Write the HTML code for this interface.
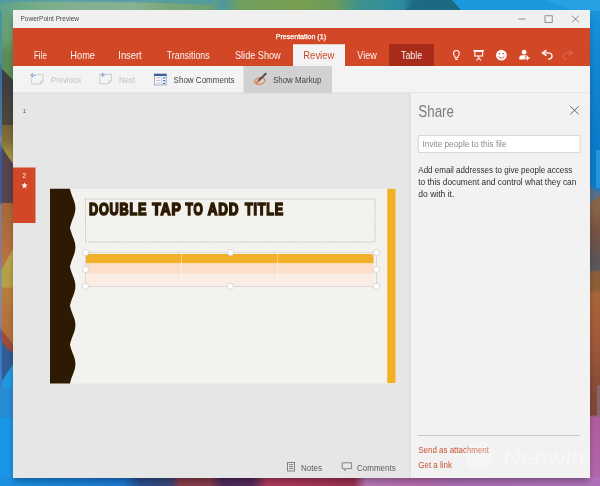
<!DOCTYPE html>
<html>
<head>
<meta charset="utf-8">
<title>PowerPoint Preview</title>
<style>
html,body{margin:0;padding:0;width:600px;height:486px;overflow:hidden;background:#1e8fdc;}
svg{display:block;position:absolute;left:0;top:0;}
text{font-family:"Liberation Sans",sans-serif;}
</style>
</head>
<body>
<svg width="600" height="486" viewBox="0 0 600 486">
<defs>
  <linearGradient id="gTop" x1="0" y1="0" x2="600" y2="0" gradientUnits="userSpaceOnUse">
    <stop offset="0" stop-color="#5fa08a"/>
    <stop offset="0.03" stop-color="#6aa884"/>
    <stop offset="0.08" stop-color="#7cae8e"/>
    <stop offset="0.22" stop-color="#88b292"/>
    <stop offset="0.28" stop-color="#78a878"/>
    <stop offset="0.35" stop-color="#6ea274"/>
    <stop offset="0.37" stop-color="#4c98a0"/>
    <stop offset="0.40" stop-color="#70a060"/>
    <stop offset="0.50" stop-color="#7a9e52"/>
    <stop offset="0.56" stop-color="#6a9a5c"/>
    <stop offset="0.60" stop-color="#3c9290"/>
    <stop offset="0.67" stop-color="#2c8c9e"/>
    <stop offset="0.69" stop-color="#1b6a82"/>
    <stop offset="1" stop-color="#1c98de"/>
  </linearGradient>
  
  <linearGradient id="gRight" x1="0" y1="0" x2="0" y2="486" gradientUnits="userSpaceOnUse">
    <stop offset="0" stop-color="#1c98de"/>
    <stop offset="0.10" stop-color="#1488d4"/>
    <stop offset="0.30" stop-color="#0c7aca"/>
    <stop offset="0.385" stop-color="#107cc8"/>
    <stop offset="0.40" stop-color="#5c7088"/>
    <stop offset="0.43" stop-color="#8a6448"/>
    <stop offset="0.47" stop-color="#7a5442"/>
    <stop offset="0.53" stop-color="#5e5456"/>
    <stop offset="0.555" stop-color="#5a5a60"/>
    <stop offset="0.56" stop-color="#8a5e38"/>
    <stop offset="0.595" stop-color="#8c6038"/>
    <stop offset="0.605" stop-color="#a8643a"/>
    <stop offset="0.70" stop-color="#a05a3a"/>
    <stop offset="0.80" stop-color="#864c38"/>
    <stop offset="0.853" stop-color="#7c4838"/>
    <stop offset="0.858" stop-color="#b05c9c"/>
    <stop offset="1" stop-color="#b068ae"/>
  </linearGradient>
  <linearGradient id="gBot" x1="0" y1="0" x2="600" y2="0" gradientUnits="userSpaceOnUse">
    <stop offset="0" stop-color="#1b90e2"/>
    <stop offset="0.10" stop-color="#1a84d8"/>
    <stop offset="0.205" stop-color="#1a78d0"/>
    <stop offset="0.235" stop-color="#2a4c8a"/>
    <stop offset="0.285" stop-color="#3a4678"/>
    <stop offset="0.30" stop-color="#8a3c4a"/>
    <stop offset="0.35" stop-color="#863a48"/>
    <stop offset="0.37" stop-color="#4c2a58"/>
    <stop offset="0.42" stop-color="#52285a"/>
    <stop offset="0.445" stop-color="#b03a5a"/>
    <stop offset="0.50" stop-color="#a83658"/>
    <stop offset="0.59" stop-color="#9a3050"/>
    <stop offset="0.61" stop-color="#b878b8"/>
    <stop offset="0.70" stop-color="#b66aaa"/>
    <stop offset="0.76" stop-color="#aa6eb6"/>
    <stop offset="1" stop-color="#ae70b8"/>
  </linearGradient>
  
  <linearGradient id="lgGreen" x1="0" y1="0" x2="0" y2="82" gradientUnits="userSpaceOnUse">
    <stop offset="0" stop-color="#64a486"/>
    <stop offset="0.45" stop-color="#6aa070"/>
    <stop offset="0.65" stop-color="#5e8c58"/>
    <stop offset="1" stop-color="#5c8a50"/>
  </linearGradient>
  <linearGradient id="lgDark" x1="0" y1="69" x2="0" y2="127" gradientUnits="userSpaceOnUse">
    <stop offset="0" stop-color="#3c3e46"/>
    <stop offset="0.5" stop-color="#44413e"/>
    <stop offset="1" stop-color="#4e4838"/>
  </linearGradient>
  <linearGradient id="lgOlive" x1="0" y1="125" x2="0" y2="170" gradientUnits="userSpaceOnUse">
    <stop offset="0" stop-color="#786238"/>
    <stop offset="0.35" stop-color="#82703a"/>
    <stop offset="0.7" stop-color="#a29640"/>
    <stop offset="1" stop-color="#a09440"/>
  </linearGradient>
  <linearGradient id="lgOrange1" x1="0" y1="203" x2="0" y2="270" gradientUnits="userSpaceOnUse">
    <stop offset="0" stop-color="#a4683a"/>
    <stop offset="0.6" stop-color="#b46e3c"/>
    <stop offset="1" stop-color="#b8744a"/>
  </linearGradient>
  <linearGradient id="lgYellow" x1="0" y1="245" x2="0" y2="289" gradientUnits="userSpaceOnUse">
    <stop offset="0" stop-color="#c4a04a"/>
    <stop offset="0.6" stop-color="#b4a046"/>
    <stop offset="1" stop-color="#b8a048"/>
  </linearGradient>
  <linearGradient id="lgOrange2" x1="0" y1="287" x2="0" y2="354" gradientUnits="userSpaceOnUse">
    <stop offset="0" stop-color="#b8803a"/>
    <stop offset="0.4" stop-color="#b6743a"/>
    <stop offset="1" stop-color="#b46c38"/>
  </linearGradient>
  <linearGradient id="lgEdge" x1="0" y1="0" x2="0" y2="388" gradientUnits="userSpaceOnUse">
    <stop offset="0" stop-color="#4a94a4"/>
    <stop offset="0.16" stop-color="#4a90a0"/>
    <stop offset="0.18" stop-color="#3a6a9a"/>
    <stop offset="0.34" stop-color="#4a7aa8"/>
    <stop offset="0.36" stop-color="#7a8a9a"/>
    <stop offset="0.39" stop-color="#3a5a9a"/>
    <stop offset="0.52" stop-color="#3a5a9a"/>
    <stop offset="0.53" stop-color="#8a7a84"/>
    <stop offset="0.68" stop-color="#8a7a88"/>
    <stop offset="0.70" stop-color="#7a9a88"/>
    <stop offset="0.74" stop-color="#8a8a98"/>
    <stop offset="0.84" stop-color="#8a8298"/>
    <stop offset="0.86" stop-color="#5a5a9a"/>
    <stop offset="0.89" stop-color="#3a78c0"/>
    <stop offset="1" stop-color="#3a80c8"/>
  </linearGradient>
  <filter id="sh" x="-5%" y="-5%" width="110%" height="110%">
    <feGaussianBlur stdDeviation="3"/>
  </filter>
</defs>

<!-- wallpaper strips -->
<rect x="0" y="0" width="600" height="486" fill="#1e8fdc"/>
<g id="wallLeft">
  <rect x="0" y="0" width="15" height="82" fill="url(#lgGreen)"/>
  <polygon points="0,68 2,69 15,82 15,127 0,127" fill="url(#lgDark)"/>
  <rect x="0" y="125" width="15" height="45" fill="url(#lgOlive)"/>
  <polygon points="0,146 2,147.500 15,167 15,204 0,204" fill="#56444e"/>
  <polygon points="0,203 15,203 15,246 2,269.500 0,270" fill="url(#lgOrange1)"/>
  <polygon points="15,245 2,269 0,269 0,289 15,289" fill="url(#lgYellow)"/>
  <rect x="0" y="287.500" width="15" height="66" fill="url(#lgOrange2)"/>
  <polygon points="0,328 15,347 15,354 8,350 0,341" fill="#9c4a3c"/>
  <polygon points="0,340 8,349.500 15,354 15,362 1,383 0,383" fill="#2f5c94"/>
  <polygon points="15,361 15,486 0,486 0,382 1,382.500" fill="#2397de"/>
  <rect x="0" y="388" width="15" height="31" fill="#268cd6"/>
  <rect x="0" y="418" width="15" height="68" fill="#1b96e6"/>
  <rect x="0" y="0" width="2" height="388" fill="url(#lgEdge)"/>
</g>
<g id="wallRight">
  <rect x="589" y="0" width="11" height="486" fill="url(#gRight)"/>
  <polygon points="589,184 600,198 600,206 589,206" fill="#5c7088"/>
  <polygon points="589,204 600,196 600,212 589,212" fill="#86644a"/>
  <rect x="597" y="385" width="3" height="32" fill="#8a6a78" opacity="0.8"/>
  <rect x="596" y="150" width="4" height="38" fill="#2c9ae2" opacity="0.8"/>
</g>
<g id="wallTop">
  <rect x="0" y="0" width="600" height="11" fill="url(#gTop)"/>
  <polygon points="0,0 215,0 212,5 150,2.500 45,1.500 14,2 0,4" fill="#4a98ae" opacity="0.7"/>
  <polygon points="404,11 420,0 452,0 462,11" fill="#1b6a82"/>
  <polygon points="452,0 600,0 600,11 462,11" fill="#1c98de"/>
  <polygon points="545,0 600,0 600,11 575,11" fill="#2aa0e4"/>
</g>
<g id="wallBot">
  <rect x="0" y="477" width="600" height="9" fill="url(#gBot)"/>
</g>
<!-- window shadow -->
<rect x="14" y="18" width="575" height="463" fill="#000" opacity="0.30" filter="url(#sh)"/>

<!-- window -->
<rect x="13" y="10" width="577" height="468" fill="#e6e6e6"/>
<!-- title bar -->
<rect x="13" y="10" width="577" height="18" fill="#f0f0f0"/>
<!-- ribbon -->
<rect x="13" y="28" width="577" height="38" fill="#d24726"/>
<!-- toolbar -->
<rect x="13" y="66" width="577" height="27" fill="#f3f3f3"/>
<rect x="13" y="92.5" width="577" height="1" fill="#dcdcdc"/>
<!-- review tab -->
<rect x="293" y="44.200" width="52" height="21.800" fill="#f3f3f3"/>
<!-- table tab -->
<rect x="389" y="44" width="45" height="22" fill="#a92b1a"/>
<!-- show markup selected -->
<rect x="243.5" y="66" width="88.5" height="27" fill="#d1d1d1"/>

<!-- share pane -->
<rect x="409.700" y="93" width="180.300" height="385" fill="#f2f2f2"/>
<rect x="409.5" y="93" width="1" height="385" fill="#d6d6d6"/>
<rect x="418.5" y="135.5" width="161.500" height="17" fill="#ffffff" stroke="#d9d9d9" stroke-width="1"/>
<rect x="418" y="435" width="162" height="1" fill="#c6c6c6"/>

<!-- selected thumbnail marker -->
<rect x="13" y="167.500" width="22.500" height="55.500" fill="#d24726"/>

<!-- slide -->
<rect x="50" y="188.800" width="345.600" height="194.700" fill="#f3f2ef"/>
<path fill="#2c1b02" d="M50 188.8 L70 188.8 L70.0 188.8 L70.3 190.4 L70.8 192.0 L71.3 193.7 L71.9 195.3 L72.5 196.9 L73.1 198.5 L73.8 200.2 L74.3 201.8 L74.8 203.4 L75.1 205.0 L75.3 206.6 L75.4 208.3 L75.3 209.9 L75.1 211.5 L74.8 213.1 L74.3 214.8 L73.8 216.4 L73.1 218.0 L72.5 219.6 L71.9 221.3 L71.3 222.9 L70.8 224.5 L70.3 226.1 L70.0 227.7 L70.3 229.4 L70.8 231.0 L71.3 232.6 L71.9 234.2 L72.5 235.9 L73.1 237.5 L73.8 239.1 L74.3 240.7 L74.8 242.3 L75.1 244.0 L75.3 245.6 L75.4 247.2 L75.3 248.8 L75.1 250.5 L74.8 252.1 L74.3 253.7 L73.8 255.3 L73.1 256.9 L72.5 258.6 L71.9 260.2 L71.3 261.8 L70.8 263.4 L70.3 265.1 L70.0 266.7 L70.3 268.3 L70.8 269.9 L71.3 271.5 L71.9 273.2 L72.5 274.8 L73.1 276.4 L73.8 278.0 L74.3 279.7 L74.8 281.3 L75.1 282.9 L75.3 284.5 L75.4 286.2 L75.3 287.8 L75.1 289.4 L74.8 291.0 L74.3 292.6 L73.8 294.3 L73.1 295.9 L72.5 297.5 L71.9 299.1 L71.3 300.8 L70.8 302.4 L70.3 304.0 L70.0 305.6 L70.3 307.2 L70.8 308.9 L71.3 310.5 L71.9 312.1 L72.5 313.7 L73.1 315.4 L73.8 317.0 L74.3 318.6 L74.8 320.2 L75.1 321.8 L75.3 323.5 L75.4 325.1 L75.3 326.7 L75.1 328.3 L74.8 330.0 L74.3 331.6 L73.8 333.2 L73.1 334.8 L72.5 336.4 L71.9 338.1 L71.3 339.7 L70.8 341.3 L70.3 342.9 L70.0 344.6 L70.3 346.2 L70.8 347.8 L71.3 349.4 L71.9 351.1 L72.5 352.7 L73.1 354.3 L73.8 355.9 L74.3 357.5 L74.8 359.2 L75.1 360.8 L75.3 362.4 L75.4 364.0 L75.3 365.7 L75.1 367.3 L74.8 368.9 L74.3 370.5 L73.8 372.1 L73.1 373.8 L72.5 375.4 L71.9 377.0 L71.3 378.6 L70.8 380.3 L70.3 381.9 L70.0 383.5 L70 383.5 L50 383.5 Z"/>
<rect x="387.300" y="188.800" width="8.200" height="194.300" fill="#f2b025"/>

<!-- title placeholder -->
<rect x="85.500" y="199" width="289.500" height="43" fill="none" stroke="#a4a4a4" stroke-width="0.7" stroke-dasharray="1.100 1.100"/>

<!-- table -->
<rect x="85.500" y="252.300" width="291" height="34.200" fill="none" stroke="#d6d6d6" stroke-width="0.9"/>
<path d="M86 263.400 V256.500 Q86 254 88.500 254 H371 Q373.500 254 373.500 256.500 V263.400 Z" fill="#f2b02a"/>
<rect x="86" y="263.400" width="287.500" height="10.300" fill="#fcdfca"/>
<rect x="86" y="273.700" width="287.500" height="11.800" fill="#fcede4"/>
<rect x="181" y="254" width="0.800" height="31.500" fill="#fff" opacity="0.55"/>
<rect x="277.300" y="254" width="0.800" height="31.500" fill="#fff" opacity="0.55"/>
<g fill="#ffffff" stroke="#c8c8c8" stroke-width="0.7">
  <circle cx="85.500" cy="252.600" r="3.100"/>
  <circle cx="230.500" cy="252.600" r="3.100"/>
  <circle cx="376.500" cy="252.600" r="3.100"/>
  <circle cx="85.500" cy="269.500" r="3.100"/>
  <circle cx="376.500" cy="269.500" r="3.100"/>
  <circle cx="85.500" cy="286.300" r="3.100"/>
  <circle cx="230.500" cy="286.300" r="3.100"/>
  <circle cx="376.500" cy="286.300" r="3.100"/>
</g>


<!-- ICONS -->
<g id="icons">
<!-- window controls -->
<g stroke="#6e6e6e" stroke-width="0.75" fill="none">
  <path d="M518.400 19 H525.600"/>
  <rect x="545" y="15.800" width="7.200" height="6.600"/>
  <path d="M571.800 15.600 L579 22.400 M579 15.600 L571.800 22.400"/>
</g>
<!-- ribbon right icons -->
<g stroke="#fff" fill="none" stroke-width="1.050">
  <!-- lightbulb -->
  <path d="M455.200 57.700 C455.200 56.200 453.500 55.500 453.500 53.400 A2.900 2.900 0 0 1 459.300 53.400 C459.300 55.500 457.600 56.200 457.600 57.700 Z"/>
  <path d="M455.300 59.300 H457.500" stroke-width="1.300"/>
  <!-- projector screen -->
  <path d="M473.300 50.700 H484.100" stroke-width="1.300"/>
  <rect x="474.800" y="51.300" width="7.800" height="4.700" stroke-width="1.100"/>
  <path d="M478.700 56.300 V58.300 M476.300 60.300 L478.700 58.200 L481.100 60.300" stroke-width="1.100"/>
  <!-- undo -->
  <path d="M546.400 50.200 L542.400 52.900 L546.500 55.700" stroke-width="1.400"/>
  <path d="M542.800 52.900 H547.800 Q552 52.900 552 56 Q552 59.100 548.300 59.200" stroke-width="1.400"/>
  <!-- redo (disabled) -->
  <g stroke="#df6043">
  <path d="M568.800 50.200 L572.800 52.900 L568.700 55.700" stroke-width="1.400"/>
  <path d="M572.400 52.900 H567.400 Q563.200 52.900 563.200 56 Q563.200 59.100 566.900 59.200" stroke-width="1.400"/>
  </g>
</g>
<!-- smiley -->
<circle cx="501.400" cy="55.200" r="5.400" fill="#fff"/>
<circle cx="499.600" cy="53.700" r="0.800" fill="#d24726"/>
<circle cx="503.200" cy="53.700" r="0.800" fill="#d24726"/>
<path d="M498.400 56.400 Q501.400 59.800 504.400 56.400" fill="none" stroke="#d24726" stroke-width="0.900"/>
<!-- person plus -->
<circle cx="524.100" cy="52.200" r="2.350" fill="#fff"/>
<path d="M519.300 59.600 V57.800 Q519.300 55.200 522 55.200 H526 Q528 55.200 528 57 V59.600 Z" fill="#fff"/>
<path d="M527.400 55.400 V60.600 M524.800 58 H530" stroke="#d24726" stroke-width="2.800" fill="none"/>
<path d="M527.400 55.800 V60.200 M525.200 58 H529.600" stroke="#fff" stroke-width="1.300" fill="none"/>

<!-- toolbar: previous -->
<g fill="none" stroke="#c9c9c9" stroke-width="0.9">
  <path d="M36.500 74.600 H43.300 V81.200 L40.600 84 H31.600 V77.200"/>
  <path d="M43.300 81.200 H40.600 V84"/>
  <path d="M99.600 77.200 V83.700 H108.800 L111.500 81 V74.400 H105"/>
  <path d="M111.500 81 H108.800 V83.700"/>
</g>
<g fill="none" stroke="#9ab2d8" stroke-width="1.250">
  <path d="M36 75.300 H31 M33.200 73.300 L31 75.300 L33.200 77.300"/>
  <path d="M99.300 74.800 H104.200 M102 72.800 L104.200 74.800 L102 76.800"/>
</g>
<!-- toolbar: show comments -->
<rect x="154.400" y="74.200" width="11.800" height="10.800" fill="#fff" stroke="#8c9bb2" stroke-width="0.8"/>
<rect x="154" y="73.800" width="12.600" height="2.200" fill="#3b5f9c"/>
<path d="M161.800 76 V85" stroke="#9aa7ba" stroke-width="0.7"/>
<path d="M155.800 77.800 H160.600 M155.800 80.400 H160.600 M155.800 83 H160.600" stroke="#a0a8b4" stroke-width="0.7"/>
<path d="M163 77.800 H165.400 M163 80.600 H165.400 M163 83.300 H165.400" stroke="#4a7ac8" stroke-width="1.300"/>
<!-- toolbar: show markup -->
<ellipse cx="259.800" cy="81" rx="5.300" ry="3.300" fill="none" stroke="#e0642a" stroke-width="0.9" transform="rotate(-12 259.800 81)"/>
<path d="M265.800 73.600 L258.600 80.800" stroke="#4d4d4d" stroke-width="2" stroke-linecap="round"/>
<path d="M258.900 80.500 L256.500 83" stroke="#e0642a" stroke-width="1.500" stroke-linecap="round"/>
<!-- thumbnail star -->
<path d="M24.500 182.200 L25.300 184.500 L27.750 184.550 L25.800 186.050 L26.500 188.400 L24.500 187 L22.500 188.400 L23.200 186.050 L21.250 184.550 L23.700 184.500 Z" fill="#fff"/>
<!-- share close -->
<path d="M570.300 106.300 L578.700 114.300 M578.700 106.300 L570.300 114.300" stroke="#555" stroke-width="0.9" fill="none"/>
<!-- status icons -->
<g fill="none" stroke="#6a6a6a" stroke-width="0.8">
  <rect x="287.600" y="462.400" width="7" height="8.600"/>
  <path d="M289 464.600 H293.200 M289 466.600 H293.200 M289 468.600 H293.200"/>
  <path d="M342.200 462.800 H351.600 V468.600 H346.800 L345 470.600 V468.600 H342.200 Z"/>
</g>
</g>

<!-- TEXT -->
<g id="texts" opacity="0.999">
<text x="20.500" y="21.400" font-size="6.600" fill="#4a4a4a" textLength="58.500" lengthAdjust="spacingAndGlyphs">PowerPoint Preview</text>
<text x="275.800" y="39.200" font-size="7.400" fill="#ffffff" stroke="#ffffff" stroke-width="0.250" textLength="50.200" lengthAdjust="spacingAndGlyphs">Presentation (1)</text>

<g font-size="10.500" fill="#ffffff" fill-opacity="0.94">
<text x="34" y="59" textLength="12.800" lengthAdjust="spacingAndGlyphs">File</text>
<text x="70.300" y="59" textLength="24.700" lengthAdjust="spacingAndGlyphs">Home</text>
<text x="118.300" y="59" textLength="23.400" lengthAdjust="spacingAndGlyphs">Insert</text>
<text x="166.700" y="59" textLength="43" lengthAdjust="spacingAndGlyphs">Transitions</text>
<text x="235" y="59" textLength="45.700" lengthAdjust="spacingAndGlyphs">Slide Show</text>
<text x="303.300" y="59" textLength="31" lengthAdjust="spacingAndGlyphs" fill="#c43e1c">Review</text>
<text x="357.300" y="59" textLength="19.400" lengthAdjust="spacingAndGlyphs">View</text>
<text x="401" y="59" textLength="21.200" lengthAdjust="spacingAndGlyphs">Table</text>
</g>

<g font-size="9.500">
<text x="51" y="82.800" fill="#c2c2c2" textLength="30" lengthAdjust="spacingAndGlyphs">Previous</text>
<text x="119" y="82.800" fill="#c2c2c2" textLength="16.200" lengthAdjust="spacingAndGlyphs">Next</text>
<text x="173.600" y="82.800" fill="#444" textLength="61" lengthAdjust="spacingAndGlyphs">Show Comments</text>
<text x="273" y="82.800" fill="#444" textLength="48.400" lengthAdjust="spacingAndGlyphs">Show Markup</text>
</g>

<text x="22.800" y="112.900" font-size="6" fill="#555">1</text>
<text x="22.600" y="178" font-size="6.400" fill="#fff">2</text>

<g font-size="17.400" font-weight="bold" fill="#2c1b02" stroke="#2c1b02" stroke-width="1.7" stroke-linejoin="miter" letter-spacing="1.1">
<text x="89.0" y="215.150" textLength="58.2" lengthAdjust="spacingAndGlyphs">DOUBLE</text>
<text x="152.2" y="215.150" textLength="29.6" lengthAdjust="spacingAndGlyphs">TAP</text>
<text x="185.5" y="215.150" textLength="18.0" lengthAdjust="spacingAndGlyphs">TO</text>
<text x="207.8" y="215.150" textLength="31.6" lengthAdjust="spacingAndGlyphs">ADD</text>
<text x="245.0" y="215.150" textLength="38.9" lengthAdjust="spacingAndGlyphs">TITLE</text>
</g>

<text x="418.300" y="116.500" font-size="16" fill="#7c7c7c" textLength="35.700" lengthAdjust="spacingAndGlyphs">Share</text>
<text x="422.500" y="147" font-size="8.300" fill="#8a8a8a" textLength="84" lengthAdjust="spacingAndGlyphs">Invite people to this file</text>
<g font-size="8.600" fill="#2e2e2e">
<text x="418.300" y="173" textLength="154" lengthAdjust="spacingAndGlyphs">Add email addresses to give people access</text>
<text x="418.300" y="185" textLength="158" lengthAdjust="spacingAndGlyphs">to this document and control what they can</text>
<text x="418.300" y="197" textLength="36" lengthAdjust="spacingAndGlyphs">do with it.</text>
</g>
<g font-size="8.600" fill="#c8502d">
<text x="418.300" y="452.500" textLength="70.700" lengthAdjust="spacingAndGlyphs">Send as attachment</text>
<text x="418.300" y="468" textLength="33.700" lengthAdjust="spacingAndGlyphs">Get a link</text>
</g>
<g font-size="8.600" fill="#5a5a5a">
<text x="301" y="470.500" textLength="21" lengthAdjust="spacingAndGlyphs">Notes</text>
<text x="357" y="470.500" textLength="38.700" lengthAdjust="spacingAndGlyphs">Comments</text>
</g>
</g>

<!-- watermark -->
<g opacity="0.42" fill="#ffffff">
<rect x="466" y="442" width="26" height="28" rx="9" ry="9" opacity="0.55"/>
<text x="503" y="464.700" font-size="22" textLength="81.500" lengthAdjust="spacingAndGlyphs">Neowin</text>
</g>

</svg>
</body>
</html>
